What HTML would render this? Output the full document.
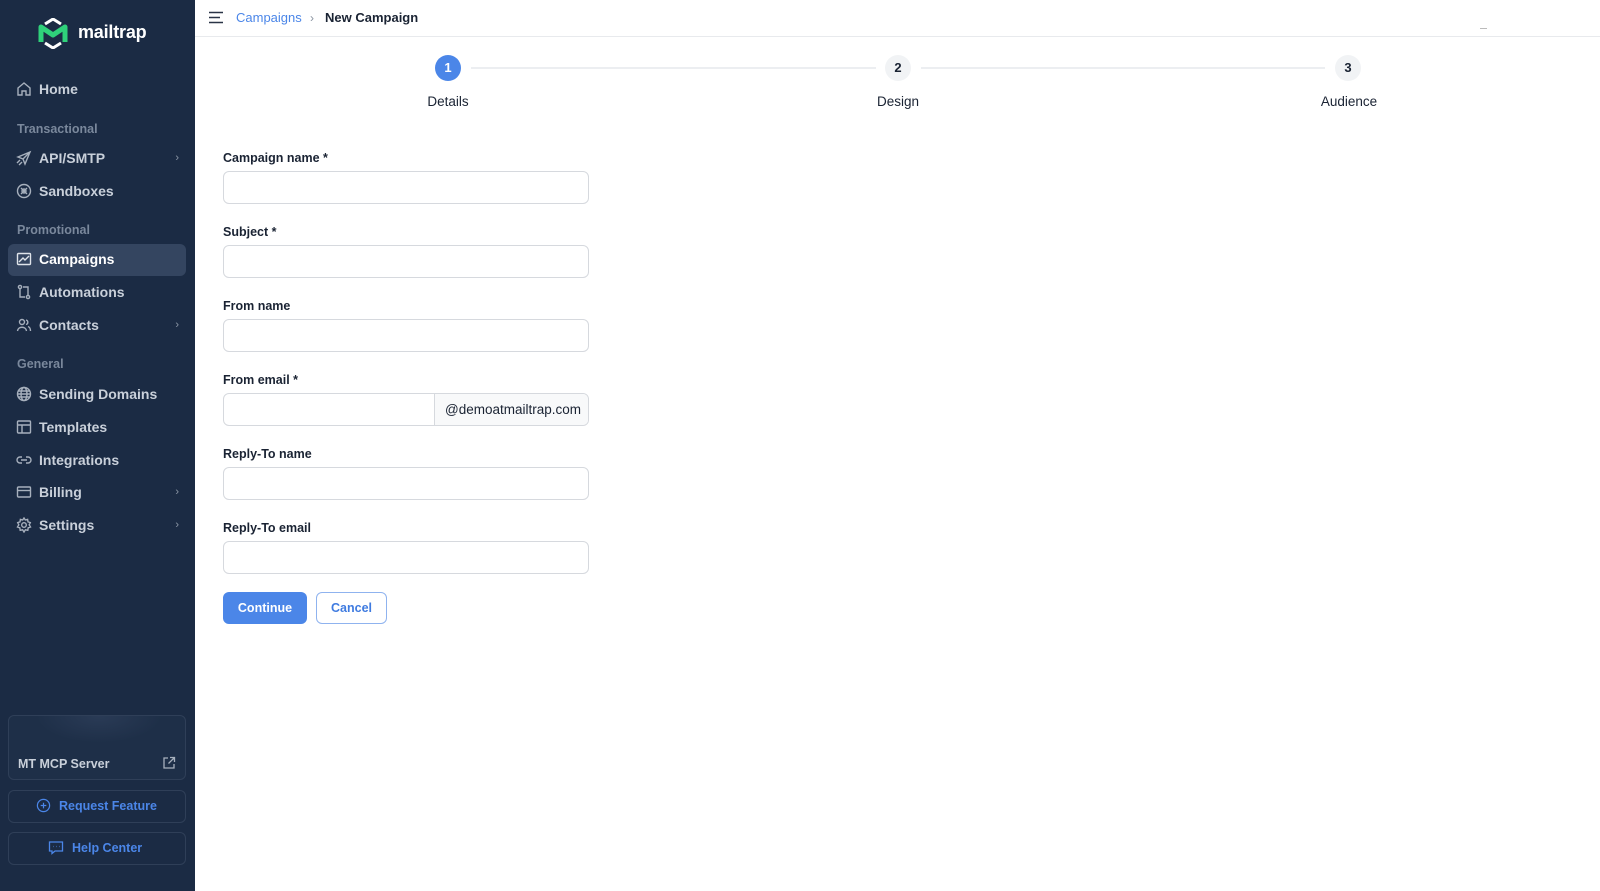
<!DOCTYPE html>
<html><head><meta charset="utf-8"><style>
*{box-sizing:border-box;margin:0;padding:0}
body{width:1600px;height:891px;overflow:hidden;font-family:"Liberation Sans",sans-serif;background:#fff;position:relative;color:#1a2333}
.sb{position:absolute;left:0;top:0;width:195px;height:891px;background:#1b2b44}
.abs{position:absolute}
.nav{position:absolute;left:16px;font-size:14px;color:#c9d0da;font-weight:bold;display:flex;align-items:center;gap:7px;width:163px}
.nav svg{width:16px;height:16px;stroke:#a7b0bd;fill:none;stroke-width:1.4}
.nav .chev{position:absolute;right:0;font-size:11px;color:#8c97a6;font-weight:normal}
.sec{position:absolute;left:17px;font-size:12.5px;color:#7a889c;font-weight:bold}
.box{position:absolute;left:8px;width:178px;border:1px solid #2f3f58;border-radius:6px}
.lbl{position:absolute;left:223px;font-size:12.5px;font-weight:bold;color:#1a2333}
.inp{position:absolute;left:223px;width:366px;height:33px;border:1px solid #d6d9de;border-radius:6px;background:#fff}
.step{position:absolute;width:26px;height:26px;border-radius:50%;background:#f1f3f5;font-size:13px;font-weight:bold;text-align:center;line-height:26px;color:#1a2333}
.slbl{position:absolute;font-size:13.5px;color:#1a2333;transform:translateX(-50%)}
</style></head><body>
<div class="sb">
 <svg class="abs" style="left:38px;top:18px" width="30" height="31" viewBox="0 0 30 31"><path d="M7 6 L15 1 L23 6" stroke="#fff" stroke-width="3" fill="none"/><path d="M7 25 L15 30 L23 25" stroke="#fff" stroke-width="3" fill="none"/><path d="M3 24 V9 L15 17 L27 9 V24" stroke="#2fd17a" stroke-width="5" fill="none" stroke-linejoin="round"/></svg>
 <div class="abs" style="left:78px;top:22px;font-size:18px;font-weight:bold;color:#fff;letter-spacing:-0.2px">mailtrap</div>
 <div class="nav" style="top:81px"><svg viewBox="0 0 16 16"><path d="M2 7 L8 2 L14 7 V14 H10 V10 H6 V14 H2 Z"/></svg>Home</div>
 <div class="sec" style="top:122px">Transactional</div>
 <div class="nav" style="top:150px"><svg viewBox="0 0 16 16"><path d="M14 2 L2 7 L7 9 L9 14 Z M7 9 L14 2 M1 13 L4 10 M3 15 L6 12"/></svg>API/SMTP<span class="chev">›</span></div>
 <div class="nav" style="top:183px"><svg viewBox="0 0 16 16"><circle cx="8" cy="8" r="6.5"/><path d="M5 5 L11 11 M11 5 L5 11"/><circle cx="8" cy="8" r="2"/></svg>Sandboxes</div>
 <div class="sec" style="top:223px">Promotional</div>
 <div class="abs" style="left:8px;top:244px;width:178px;height:32px;border-radius:6px;background:#344560"></div>
 <div class="nav" style="top:251px;color:#fff"><svg viewBox="0 0 16 16" style="stroke:#dfe4ea"><rect x="1.5" y="2.5" width="13" height="11" rx="1"/><path d="M3 11 L7 7 L9 9 L13 5"/></svg>Campaigns</div>
 <div class="nav" style="top:284px"><svg viewBox="0 0 16 16"><circle cx="4" cy="3" r="1.6"/><circle cx="12" cy="13" r="1.6"/><path d="M4 5 V13 H9 M12 11 V3 H7"/></svg>Automations</div>
 <div class="nav" style="top:317px"><svg viewBox="0 0 16 16"><circle cx="6" cy="5" r="2.5"/><path d="M1.5 14 C2 9 10 9 10.5 14 M10 3 A2.3 2.3 0 0 1 10 7.5 M12 9.5 C13.5 10 14.5 11.5 14.5 14"/></svg>Contacts<span class="chev">›</span></div>
 <div class="sec" style="top:357px">General</div>
 <div class="nav" style="top:386px"><svg viewBox="0 0 16 16"><circle cx="8" cy="8" r="6.5"/><ellipse cx="8" cy="8" rx="3" ry="6.5"/><path d="M1.5 8 H14.5 M2.5 5 H13.5 M2.5 11 H13.5"/></svg>Sending Domains</div>
 <div class="nav" style="top:419px"><svg viewBox="0 0 16 16"><rect x="1.5" y="2" width="13" height="12" rx="1"/><path d="M1.5 6 H14.5 M6 6 V14"/></svg>Templates</div>
 <div class="nav" style="top:452px"><svg viewBox="0 0 16 16"><path d="M6 5 H4 A3 3 0 0 0 4 11 H6 M10 5 H12 A3 3 0 0 1 12 11 H10 M5 8 H11"/></svg>Integrations</div>
 <div class="nav" style="top:484px"><svg viewBox="0 0 16 16"><rect x="1.5" y="3" width="13" height="10" rx="1"/><path d="M1.5 6.5 H14.5"/></svg>Billing<span class="chev">›</span></div>
 <div class="nav" style="top:517px"><svg viewBox="0 0 16 16"><circle cx="8" cy="8" r="2.3"/><path d="M8 1 L9.3 3 L11.6 2.4 L12 4.8 L14.3 5.6 L13.2 7.8 L14.5 10 L12.2 10.8 L11.8 13.3 L9.4 12.8 L8 15 L6.6 12.8 L4.2 13.3 L3.8 10.8 L1.5 10 L2.8 7.8 L1.7 5.6 L4 4.8 L4.4 2.4 L6.7 3 Z"/></svg>Settings<span class="chev">›</span></div>
 <div class="box" style="top:715px;height:65px;background:radial-gradient(ellipse 70px 30px at 90px 0,#2a3b56,#1e2f48 90%)"></div>
 <div class="abs" style="left:18px;top:757px;font-size:12.5px;font-weight:bold;color:#c9d0da">MT MCP Server</div>
 <svg class="abs" style="left:162px;top:756px" width="14" height="14" viewBox="0 0 14 14" fill="none" stroke="#a7b0bd" stroke-width="1.3"><path d="M6 2 H2 V12 H12 V8 M8 1.5 H12.5 V6 M12.5 1.5 L6.5 7.5"/></svg>
 <div class="box" style="top:790px;height:33px"></div>
 <div class="abs" style="left:36px;top:798px;font-size:12.5px;font-weight:bold;color:#4b86e8;display:flex;align-items:center;gap:8px"><svg width="15" height="15" viewBox="0 0 16 16" fill="none" stroke="#4b86e8" stroke-width="1.3"><circle cx="8" cy="8" r="6.5"/><path d="M8 5 V11 M5 8 H11"/></svg>Request Feature</div>
 <div class="box" style="top:832px;height:33px"></div>
 <div class="abs" style="left:48px;top:840px;font-size:12.5px;font-weight:bold;color:#4b86e8;display:flex;align-items:center;gap:8px"><svg width="16" height="15" viewBox="0 0 16 15" fill="none" stroke="#4b86e8" stroke-width="1.3"><path d="M1.5 2 H14.5 V11 H7 L4 13.5 V11 H1.5 Z"/><path d="M5 6.5 h.5 M8 6.5 h.5 M11 6.5 h.5"/></svg>Help Center</div>
</div>
<div class="abs" style="left:195px;top:36px;width:1405px;height:1px;background:#e8eaed"></div>
<svg class="abs" style="left:208px;top:11px" width="16" height="13" viewBox="0 0 16 13" stroke="#2a3447" stroke-width="1.6"><path d="M1 1.5 H15 M1 6.5 H12 M1 11.5 H15"/></svg>
<div class="abs" style="left:236px;top:10px;font-size:13px;color:#4b86e8">Campaigns</div>
<div class="abs" style="left:310px;top:11px;font-size:12px;color:#8a93a0">›</div>
<div class="abs" style="left:325px;top:10px;font-size:13px;color:#1a2333;font-weight:bold">New Campaign</div>
<div class="abs" style="left:1480px;top:28px;width:7px;height:1px;background:#bbb"></div>
<div class="abs" style="left:471px;top:67px;width:405px;height:2px;background:#eceef1"></div>
<div class="abs" style="left:921px;top:67px;width:404px;height:2px;background:#eceef1"></div>
<div class="step" style="left:435px;top:55px;background:#4b86e8;color:#fff">1</div>
<div class="step" style="left:885px;top:55px">2</div>
<div class="step" style="left:1335px;top:55px">3</div>
<div class="slbl" style="left:448px;top:94px">Details</div>
<div class="slbl" style="left:898px;top:94px">Design</div>
<div class="slbl" style="left:1349px;top:94px">Audience</div>
<div class="lbl" style="top:151px">Campaign name *</div><div class="inp" style="top:171px"></div>
<div class="lbl" style="top:225px">Subject *</div><div class="inp" style="top:245px"></div>
<div class="lbl" style="top:299px">From name</div><div class="inp" style="top:319px"></div>
<div class="lbl" style="top:373px">From email *</div>
<div class="inp" style="top:393px;overflow:hidden"><div style="position:absolute;left:210px;top:0;right:0;bottom:0;background:#f8f9fa;border-left:1px solid #d6d9de;font-size:13.5px;line-height:31px;padding-left:10px;color:#1a2333">@demoatmailtrap.com</div></div>
<div class="lbl" style="top:447px">Reply-To name</div><div class="inp" style="top:467px"></div>
<div class="lbl" style="top:521px">Reply-To email</div><div class="inp" style="top:541px"></div>
<div class="abs" style="left:223px;top:592px;width:84px;height:32px;border-radius:6px;background:#4b86e8;color:#fff;font-size:12.5px;font-weight:bold;text-align:center;line-height:32px">Continue</div>
<div class="abs" style="left:316px;top:592px;width:71px;height:32px;border-radius:6px;border:1px solid #8fb3ef;color:#3f7be0;font-size:12.5px;font-weight:bold;text-align:center;line-height:30px">Cancel</div>
</body></html>
